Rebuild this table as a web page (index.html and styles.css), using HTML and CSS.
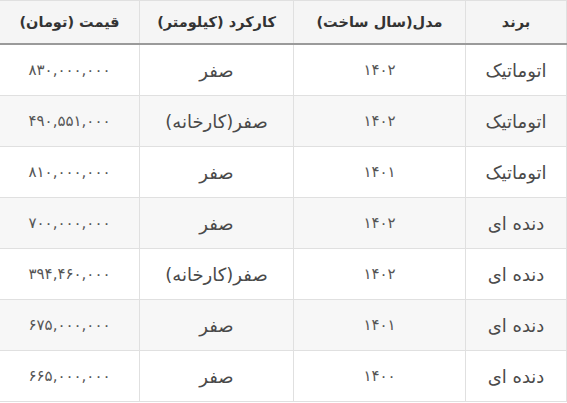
FILE: index.html
```html
<!DOCTYPE html>
<html lang="fa" dir="rtl">
<head>
<meta charset="utf-8">
<link rel="stylesheet" href="styles.css">
</head>
<body>
<table class="cars">
  <thead>
    <tr>
      <th class="c-brand">برند</th>
      <th class="c-model">مدل(سال ساخت)</th>
      <th class="c-km">کارکرد (کیلومتر)</th>
      <th class="c-price">قیمت (تومان)</th>
    </tr>
  </thead>
  <tbody>
    <tr><td class="word">اتوماتیک</td><td class="num">۱۴۰۲</td><td class="word">صفر</td><td class="num c-price">۸۳۰,۰۰۰,۰۰۰</td></tr>
    <tr><td class="word">اتوماتیک</td><td class="num">۱۴۰۲</td><td class="word">صفر(کارخانه)</td><td class="num c-price">۴۹۰,۵۵۱,۰۰۰</td></tr>
    <tr><td class="word">اتوماتیک</td><td class="num">۱۴۰۱</td><td class="word">صفر</td><td class="num c-price">۸۱۰,۰۰۰,۰۰۰</td></tr>
    <tr><td class="word">دنده ای</td><td class="num">۱۴۰۲</td><td class="word">صفر</td><td class="num c-price">۷۰۰,۰۰۰,۰۰۰</td></tr>
    <tr><td class="word">دنده ای</td><td class="num">۱۴۰۲</td><td class="word">صفر(کارخانه)</td><td class="num c-price">۳۹۴,۴۶۰,۰۰۰</td></tr>
    <tr><td class="word">دنده ای</td><td class="num">۱۴۰۱</td><td class="word">صفر</td><td class="num c-price">۶۷۵,۰۰۰,۰۰۰</td></tr>
    <tr><td class="word">دنده ای</td><td class="num">۱۴۰۰</td><td class="word">صفر</td><td class="num c-price">۶۶۵,۰۰۰,۰۰۰</td></tr>
  </tbody>
</table>
</body>
</html>
```
FILE: styles.css
```css
html, body {
  margin: 0;
  padding: 0;
  background: #ffffff;
}
body {
  font-family: "DejaVu Sans", "Noto Sans", sans-serif;
  color: #4a4a4a;
}
.cars {
  width: 567px;
  border-collapse: collapse;
  table-layout: fixed;
  direction: rtl;
}
.cars th,
.cars td {
  text-align: center;
  vertical-align: middle;
  border: 1px solid #e0e0e0;
  padding: 0;
}
.cars th {
  height: 42px;
  background: #f5f5f5;
  color: #333333;
  font-size: 14.5px;
  font-weight: bold;
  border-bottom: 2px solid #9a9a9a;
}
.cars td {
  height: 50px;
}
.cars td.word {
  font-size: 18px;
}
.cars td.num {
  font-size: 15px;
  color: #555555;
}
.cars tbody tr:nth-child(even) td {
  background: #f7f7f7;
}
.cars .c-brand { width: 100px; }
.cars .c-model { width: 171px; }
.cars .c-km { width: 153px; }
.cars .c-price { border-left: none; }
```
